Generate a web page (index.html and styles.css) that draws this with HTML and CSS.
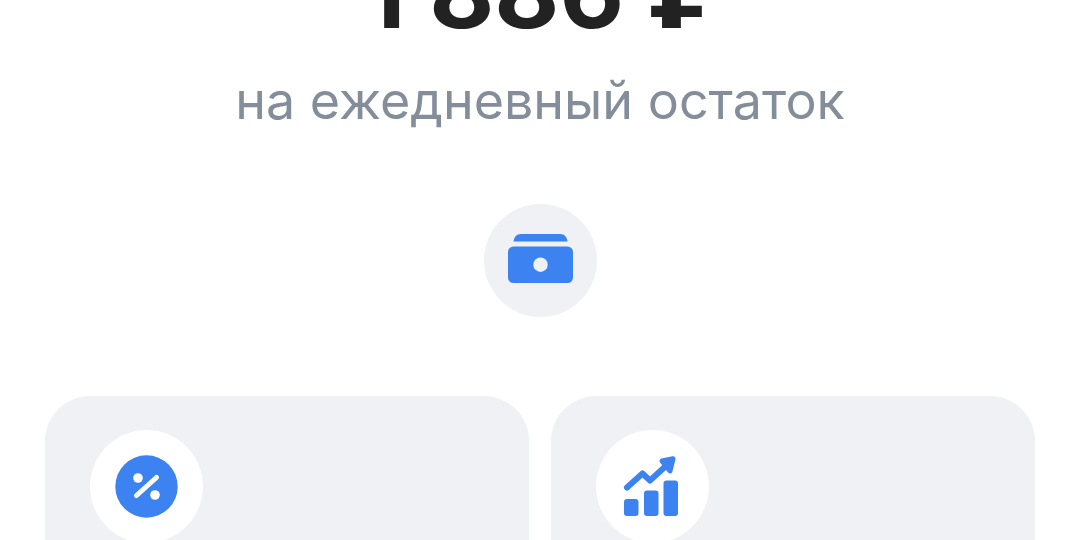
FILE: index.html
```html
<!DOCTYPE html>
<html lang="ru">
  <head>
    <meta charset="UTF-8" />
    <meta name="viewport" content="width=device-width, initial-scale=1.0" />
    <title>Ежедневный остаток</title>
    <link rel="stylesheet" href="styles.css">
  </head>
  <body>
    <main class="page">
      <section class="summary">
        <h1 class="amount">1 886 <span class="currency">₽</span></h1>
        <p class="caption">на ежедневный остаток</p>
        <div class="circle">
          <svg class="icon" viewBox="0 0 113 113" aria-hidden="true">
            <path d="M29.500 37.500C30 33 32.500 30 37 30H76C80.500 30 83 33 83.500 37.500Z" />
            <rect x="24" y="42.500" width="65" height="36.500" rx="5.500" />
            <circle class="hole" cx="56.500" cy="60.700" r="7.200" />
          </svg>
        </div>
      </section>

      <section class="cards">
        <div class="card">
          <div class="circle">
            <svg class="icon" viewBox="0 0 113 113" aria-hidden="true">
              <circle cx="56.500" cy="56.500" r="31.200" />
              <circle class="light" cx="48" cy="48" r="4.800" />
              <circle class="light" cx="65" cy="65" r="4.800" />
              <path class="slash" d="M46.500 65.500L66.500 47.500" />
            </svg>
          </div>
        </div>
        <div class="card">
          <div class="circle">
            <svg class="icon" viewBox="0 0 113 113" aria-hidden="true">
              <rect x="28" y="69" width="14.500" height="17" rx="3" />
              <rect x="48" y="60.500" width="14.500" height="25.500" rx="3" />
              <rect x="67.500" y="50.500" width="14.500" height="35.500" rx="3" />
              <path class="trend" d="M31 57.500L46.500 43.500L54 50.500L72 34" />
              <path class="arrow" d="M66 31L77 28.800L74 41Z" />
            </svg>
          </div>
        </div>
      </section>
    </main>
  </body>
</html>
```
FILE: styles.css
```css
body {
  margin: 0;
  height: 100vh;
  overflow: hidden;
  background: #fff;
  font-family: Inter, "Noto Sans", sans-serif;
}

.page {
  padding: 0 45px;
}

.summary {
  display: flex;
  flex-direction: column;
  align-items: center;
}

/* the amount is partly scrolled off the top */
.amount {
  margin: -68px 0 0;
  font-size: 100px;
  line-height: 120px;
  font-weight: 700;
  color: #222;
}

.currency {
  font-family: "DejaVu Sans", sans-serif;
  line-height: 1;
}

.caption {
  margin: 17px 0 71px;
  font-size: 52px;
  line-height: 64px;
  color: #838e9a;
}

.circle {
  width: 113px;
  height: 113px;
  border-radius: 50%;
  background: #eff1f5;
}

.icon {
  display: block;
  width: 100%;
  fill: #3c82f0;
}

.hole {
  fill: #eff1f5;
}

.light {
  fill: #fff;
}

.slash {
  stroke: #fff;
  stroke-width: 5;
  stroke-linecap: round;
}

.trend {
  fill: none;
  stroke: #3c82f0;
  stroke-width: 6;
  stroke-linecap: round;
  stroke-linejoin: round;
}

.arrow {
  stroke: #3c82f0;
  stroke-width: 5;
  stroke-linejoin: round;
}

.cards {
  display: grid;
  grid-template-columns: 1fr 1fr;
  gap: 22px;
  margin-top: 79px;
}

.card {
  height: 144px;
  box-sizing: border-box;
  padding: 34px 45px;
  border-radius: 45px 45px 0 0;
  background: #eff1f5;
}

.card .circle {
  background: #fff;
}
```
